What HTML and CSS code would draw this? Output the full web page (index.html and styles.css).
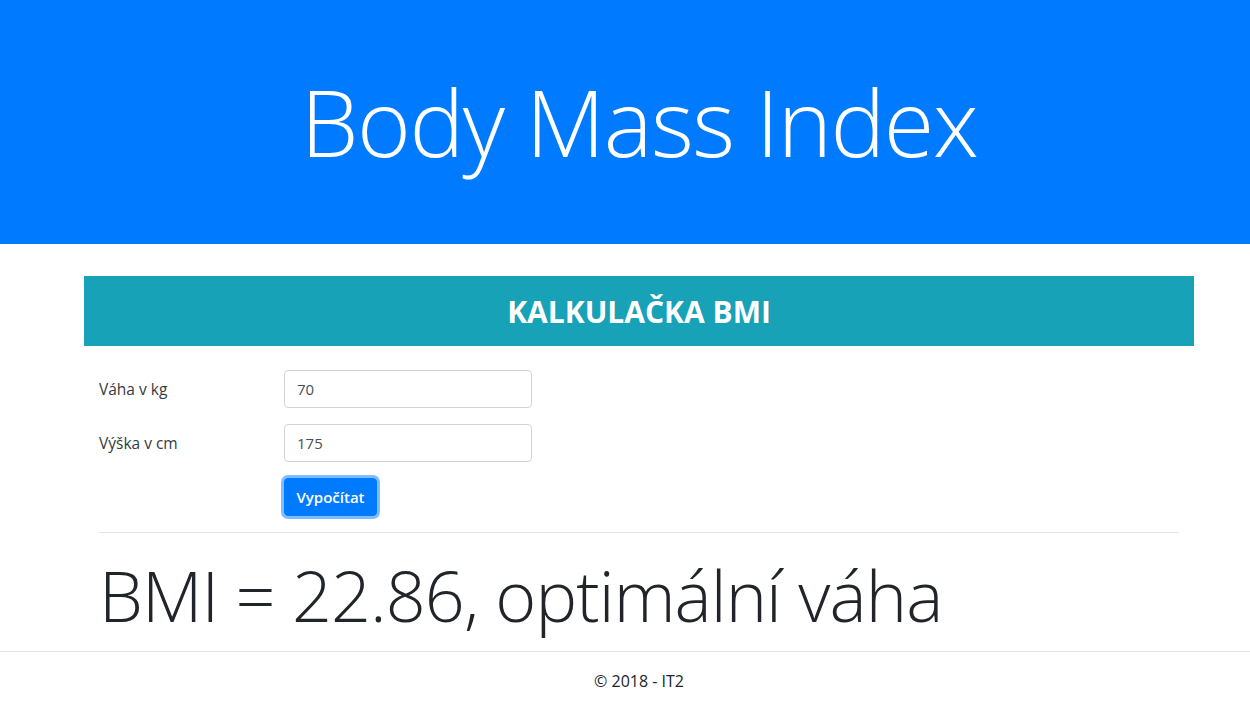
FILE: index.html
```html
<!DOCTYPE html>
<html lang="cs">
<head>
<meta charset="utf-8">
<title>Body Mass Index</title>
<link rel="stylesheet" href="styles.css">
</head>
<body>
<header class="hero">
  <div class="page">
    <h1 class="hero-title">Body Mass Index</h1>
  </div>
</header>
<div class="page">
  <main class="container">
    <div class="card-head"><h3>KALKULAČKA BMI</h3></div>
    <form class="calc">
      <div class="row">
        <label for="w">Váha v kg</label>
        <input id="w" type="text" value="70">
      </div>
      <div class="row">
        <label for="h">Výška v cm</label>
        <input id="h" type="text" value="175">
      </div>
      <div class="row">
        <span></span>
        <div><button type="button" class="btn">Vypočítat</button></div>
      </div>
    </form>
    <hr class="sep">
    <p class="result">BMI = 22.86, optimální váha</p>
  </main>
</div>
<footer class="foot">
  <div class="page"><p>© 2018 - IT2</p></div>
</footer>
</body>
</html>
```
FILE: styles.css
```css
html, body { margin: 0; padding: 0; }
body {
  font-family: "Open Sans", "Noto Sans", sans-serif;
  color: #212529;
  background: #fff;
  overflow-x: hidden;
  font-size: 15px;
}
.page { width: 1278px; flex: none; }
.hero {
  background: #007bff;
  height: 244px;
  display: flex;
  align-items: center;
}
.hero-title {
  margin: 0;
  text-align: center;
  color: #fff;
  font-weight: 300;
  font-size: 92px;
  letter-spacing: -1.5px;
  line-height: 1.2;
}
.container {
  width: 1110px;
  margin: 32px auto 0;
}
.card-head {
  background: #17a2b8;
  height: 70px;
  display: flex;
  align-items: center;
  justify-content: center;
}
.card-head h3 {
  margin: 0;
  color: #fff;
  font-size: 30px;
  font-weight: 700;
}
.calc {
  padding: 24px 15px 0;
  display: flex;
  flex-direction: column;
  gap: 16px;
}
.row {
  display: grid;
  grid-template-columns: 185px 248px;
  align-items: center;
}
.row label { font-size: 15.5px; color: #343a40; }
.row input {
  box-sizing: border-box;
  height: 38px;
  width: 248px;
  border: 1px solid #ced4da;
  border-radius: 4px;
  padding: 0 12px;
  font: inherit;
  font-size: 15px;
  color: #495057;
}
.btn {
  box-sizing: border-box;
  height: 38px;
  width: 93px;
  padding: 0;
  background: #007bff;
  color: #fff;
  border: 1px solid #007bff;
  border-radius: 4px;
  font: inherit;
  font-size: 15px;
  font-weight: 600;
  box-shadow: 0 0 0 3px rgba(0,123,255,.5);
}
.sep {
  margin: 16px 15px 0;
  border: 0;
  border-top: 1px solid rgba(0,0,0,.1);
}
.result {
  margin: 20px 15px 14px;
  font-size: 70px;
  letter-spacing: -0.9px;
  font-weight: 300;
  line-height: 84px;
  white-space: nowrap;
}
.foot {
  border-top: 1px solid #e5e5e5;
}
.foot p {
  margin: 0;
  text-align: center;
  line-height: 58px;
  font-size: 16px;
}
```
